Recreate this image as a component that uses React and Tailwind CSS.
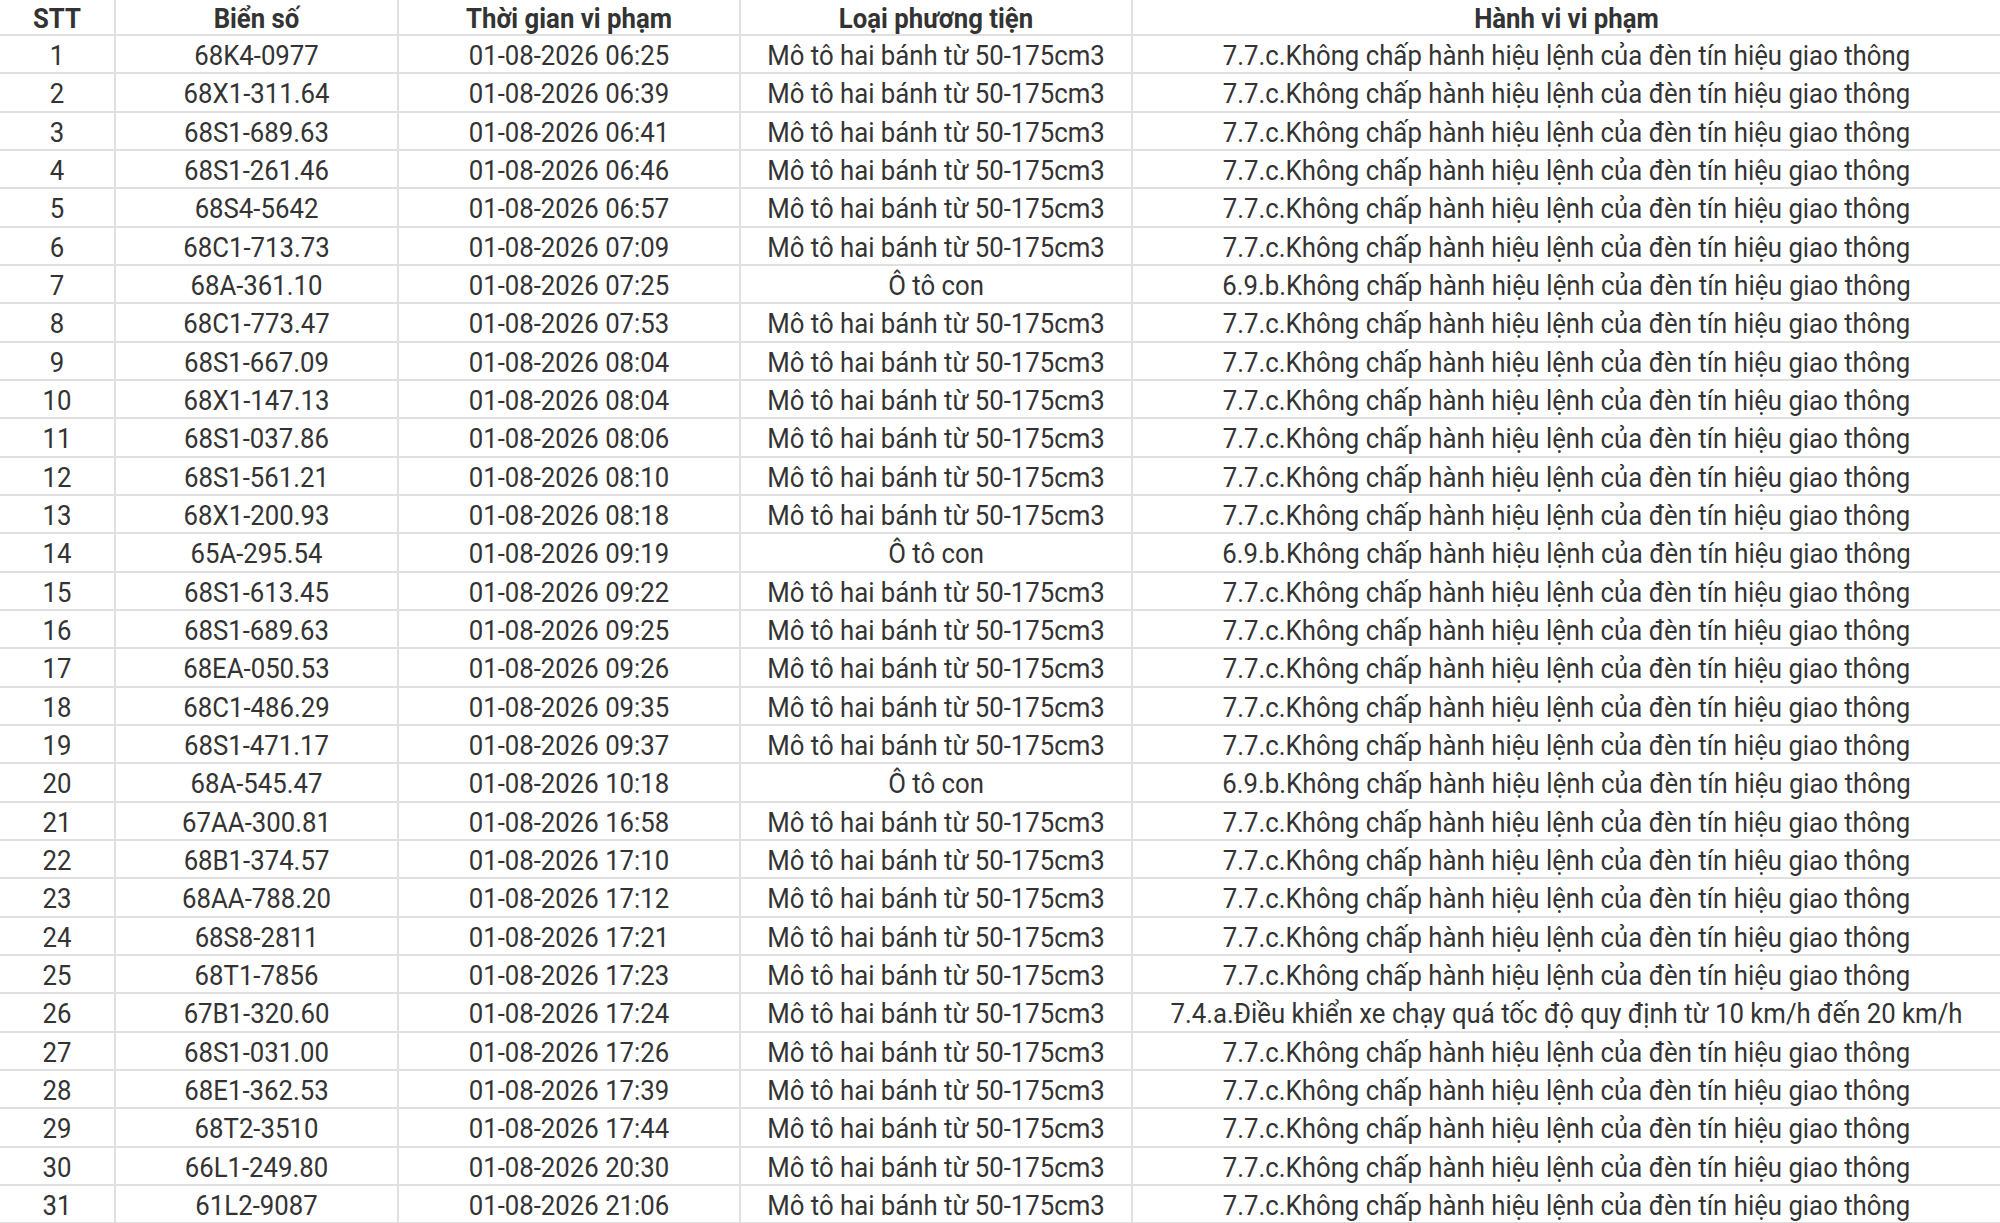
import React from "react";

const M = "Mô tô hai bánh từ 50-175cm3";
const O = "Ô tô con";
const A = "7.7.c.Không chấp hành hiệu lệnh của đèn tín hiệu giao thông";
const B = "6.9.b.Không chấp hành hiệu lệnh của đèn tín hiệu giao thông";
const C = "7.4.a.Điều khiển xe chạy quá tốc độ quy định từ 10 km/h đến 20 km/h";

const rows = [
  ["68K4-0977", "06:25", M, A],
  ["68X1-311.64", "06:39", M, A],
  ["68S1-689.63", "06:41", M, A],
  ["68S1-261.46", "06:46", M, A],
  ["68S4-5642", "06:57", M, A],
  ["68C1-713.73", "07:09", M, A],
  ["68A-361.10", "07:25", O, B],
  ["68C1-773.47", "07:53", M, A],
  ["68S1-667.09", "08:04", M, A],
  ["68X1-147.13", "08:04", M, A],
  ["68S1-037.86", "08:06", M, A],
  ["68S1-561.21", "08:10", M, A],
  ["68X1-200.93", "08:18", M, A],
  ["65A-295.54", "09:19", O, B],
  ["68S1-613.45", "09:22", M, A],
  ["68S1-689.63", "09:25", M, A],
  ["68EA-050.53", "09:26", M, A],
  ["68C1-486.29", "09:35", M, A],
  ["68S1-471.17", "09:37", M, A],
  ["68A-545.47", "10:18", O, B],
  ["67AA-300.81", "16:58", M, A],
  ["68B1-374.57", "17:10", M, A],
  ["68AA-788.20", "17:12", M, A],
  ["68S8-2811", "17:21", M, A],
  ["68T1-7856", "17:23", M, A],
  ["67B1-320.60", "17:24", M, C],
  ["68S1-031.00", "17:26", M, A],
  ["68E1-362.53", "17:39", M, A],
  ["68T2-3510", "17:44", M, A],
  ["66L1-249.80", "20:30", M, A],
  ["61L2-9087", "21:06", M, A],
];

const cell = "flex items-center justify-center border-r-2 border-[#e0e0e0] whitespace-nowrap";
const last = "flex items-center justify-center whitespace-nowrap";

function T({ children }) {
  return <span className="inline-block scale-y-[1.1] translate-y-[1px]">{children}</span>;
}

export default function App() {
  return (
    <div
      className="w-[2000px] h-[1223px] overflow-hidden bg-white text-[#333333]"
      style={{ fontFamily: "Roboto, 'Noto Sans', sans-serif" }}
    >
      <div className="grid grid-cols-[116px_283px_342px_392px_1fr] h-[36px] border-b-2 border-[#e0e0e0] text-[25.75px] leading-[30px] font-bold">
        <div className={cell}><T>STT</T></div>
        <div className={cell}><T>Biển số</T></div>
        <div className={cell}><T>Thời gian vi phạm</T></div>
        <div className={cell}><T>Loại phương tiện</T></div>
        <div className={last}><T>Hành vi vi phạm</T></div>
      </div>
      {rows.map((r, i) => (
        <div
          key={i}
          className="grid grid-cols-[116px_283px_342px_392px_1fr] h-[38.33px] border-b-2 border-[#e0e0e0] text-[25.75px] leading-[30px]"
        >
          <div className={cell}><T>{i + 1}</T></div>
          <div className={cell}><T>{r[0]}</T></div>
          <div className={cell}><T>01-08-2026 {r[1]}</T></div>
          <div className={cell}><T>{r[2]}</T></div>
          <div className={last}><T>{r[3]}</T></div>
        </div>
      ))}
    </div>
  );
}
